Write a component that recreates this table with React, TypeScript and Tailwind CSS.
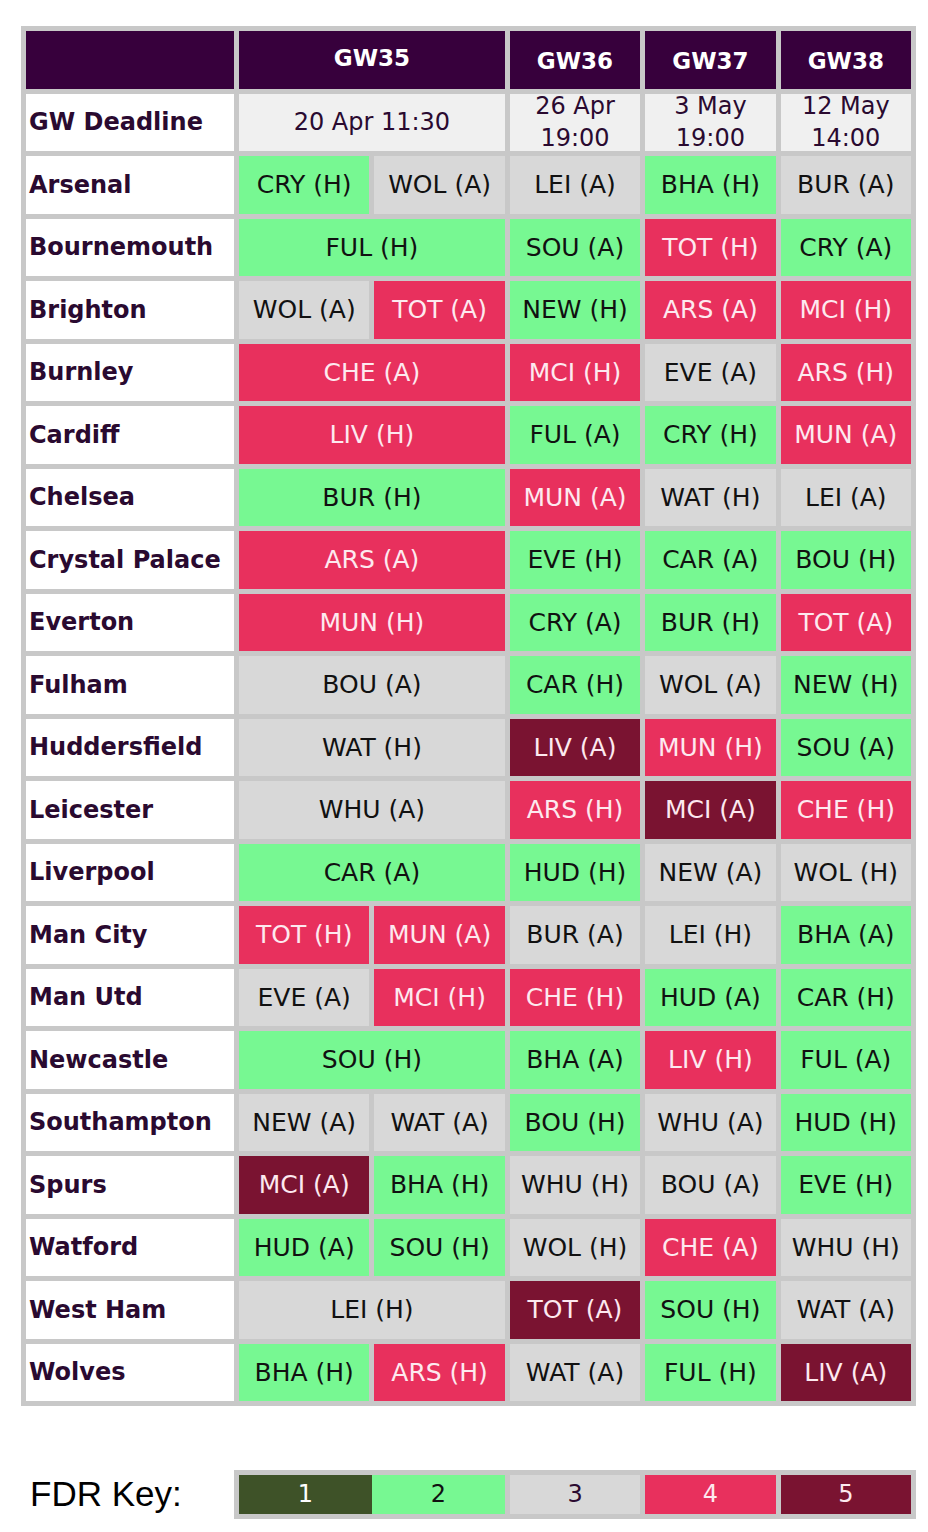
type Fdr = 1 | 2 | 3 | 4 | 5

type Fixture = { t: string; d: Fdr }

interface TeamRow {
  name: string
  gw35: Fixture[]
  gw36: Fixture
  gw37: Fixture
  gw38: Fixture
}

const f = (t: string, d: Fdr): Fixture => ({ t, d })

const rows: TeamRow[] = [
  { name: "Arsenal", gw35: [f("CRY (H)", 2), f("WOL (A)", 3)], gw36: f("LEI (A)", 3), gw37: f("BHA (H)", 2), gw38: f("BUR (A)", 3) },
  { name: "Bournemouth", gw35: [f("FUL (H)", 2)], gw36: f("SOU (A)", 2), gw37: f("TOT (H)", 4), gw38: f("CRY (A)", 2) },
  { name: "Brighton", gw35: [f("WOL (A)", 3), f("TOT (A)", 4)], gw36: f("NEW (H)", 2), gw37: f("ARS (A)", 4), gw38: f("MCI (H)", 4) },
  { name: "Burnley", gw35: [f("CHE (A)", 4)], gw36: f("MCI (H)", 4), gw37: f("EVE (A)", 3), gw38: f("ARS (H)", 4) },
  { name: "Cardiff", gw35: [f("LIV (H)", 4)], gw36: f("FUL (A)", 2), gw37: f("CRY (H)", 2), gw38: f("MUN (A)", 4) },
  { name: "Chelsea", gw35: [f("BUR (H)", 2)], gw36: f("MUN (A)", 4), gw37: f("WAT (H)", 3), gw38: f("LEI (A)", 3) },
  { name: "Crystal Palace", gw35: [f("ARS (A)", 4)], gw36: f("EVE (H)", 2), gw37: f("CAR (A)", 2), gw38: f("BOU (H)", 2) },
  { name: "Everton", gw35: [f("MUN (H)", 4)], gw36: f("CRY (A)", 2), gw37: f("BUR (H)", 2), gw38: f("TOT (A)", 4) },
  { name: "Fulham", gw35: [f("BOU (A)", 3)], gw36: f("CAR (H)", 2), gw37: f("WOL (A)", 3), gw38: f("NEW (H)", 2) },
  { name: "Huddersfield", gw35: [f("WAT (H)", 3)], gw36: f("LIV (A)", 5), gw37: f("MUN (H)", 4), gw38: f("SOU (A)", 2) },
  { name: "Leicester", gw35: [f("WHU (A)", 3)], gw36: f("ARS (H)", 4), gw37: f("MCI (A)", 5), gw38: f("CHE (H)", 4) },
  { name: "Liverpool", gw35: [f("CAR (A)", 2)], gw36: f("HUD (H)", 2), gw37: f("NEW (A)", 3), gw38: f("WOL (H)", 3) },
  { name: "Man City", gw35: [f("TOT (H)", 4), f("MUN (A)", 4)], gw36: f("BUR (A)", 3), gw37: f("LEI (H)", 3), gw38: f("BHA (A)", 2) },
  { name: "Man Utd", gw35: [f("EVE (A)", 3), f("MCI (H)", 4)], gw36: f("CHE (H)", 4), gw37: f("HUD (A)", 2), gw38: f("CAR (H)", 2) },
  { name: "Newcastle", gw35: [f("SOU (H)", 2)], gw36: f("BHA (A)", 2), gw37: f("LIV (H)", 4), gw38: f("FUL (A)", 2) },
  { name: "Southampton", gw35: [f("NEW (A)", 3), f("WAT (A)", 3)], gw36: f("BOU (H)", 2), gw37: f("WHU (A)", 3), gw38: f("HUD (H)", 2) },
  { name: "Spurs", gw35: [f("MCI (A)", 5), f("BHA (H)", 2)], gw36: f("WHU (H)", 3), gw37: f("BOU (A)", 3), gw38: f("EVE (H)", 2) },
  { name: "Watford", gw35: [f("HUD (A)", 2), f("SOU (H)", 2)], gw36: f("WOL (H)", 3), gw37: f("CHE (A)", 4), gw38: f("WHU (H)", 3) },
  { name: "West Ham", gw35: [f("LEI (H)", 3)], gw36: f("TOT (A)", 5), gw37: f("SOU (H)", 2), gw38: f("WAT (A)", 3) },
  { name: "Wolves", gw35: [f("BHA (H)", 2), f("ARS (H)", 4)], gw36: f("WAT (A)", 3), gw37: f("FUL (H)", 2), gw38: f("LIV (A)", 5) },
]

// fdr colours, full class names so tailwind picks them up
const fdrClass: Record<Fdr, string> = {
  1: "bg-[#3e5228] text-white",
  2: "bg-[#77f892] text-[#111111]",
  3: "bg-[#d8d8d8] text-[#111111]",
  4: "bg-[#e8305d] text-[#fde9ef]",
  5: "bg-[#7a1331] text-[#fde9ef]",
}

function FixtureCell({ fx, span }: { fx: Fixture; span?: boolean }) {
  return (
    <div className={`${fdrClass[fx.d]} ${span ? "col-span-2" : ""} flex items-center justify-center text-[25px]`}>
      {fx.t}
    </div>
  )
}

function Deadline({ lines, span }: { lines: string[]; span?: boolean }) {
  return (
    <div
      className={`${span ? "col-span-2" : ""} bg-[#f0f0f0] text-[#2a0a30] flex flex-col items-center justify-center text-[24px] leading-[32px]`}
    >
      {lines.map((l) => (
        <span key={l}>{l}</span>
      ))}
    </div>
  )
}

export default function App() {
  const headers = ["GW36", "GW37", "GW38"]

  return (
    <div className="min-h-[1532px] w-[928px] bg-white pl-[21px] pt-[26px] font-['DejaVu_Sans',sans-serif]">
      <div className="grid w-[895px] grid-cols-[208px_repeat(5,1fr)] auto-rows-[57.5px] gap-[5px] bg-[#c8c8c8] p-[5px]">
        {/* header row */}
        <div className="bg-[#37003c]" />
        <div className="col-span-2 flex items-center justify-center bg-[#37003c] pb-[4px] text-[23px] font-bold text-white">
          GW35
        </div>
        {headers.map((h) => (
          <div key={h} className="flex items-center justify-center bg-[#37003c] pt-[2px] text-[23px] font-bold text-white">
            {h}
          </div>
        ))}

        {/* deadlines */}
        <div className="flex items-center bg-white pl-[3px] text-[24px] font-bold text-[#2a0a30]">GW Deadline</div>
        <Deadline lines={["20 Apr 11:30"]} span />
        <Deadline lines={["26 Apr", "19:00"]} />
        <Deadline lines={["3 May", "19:00"]} />
        <Deadline lines={["12 May", "14:00"]} />

        {rows.map((r) => (
          <div key={r.name} className="contents">
            <div className="flex items-center bg-white pl-[3px] text-[24px] font-bold text-[#2a0a30]">{r.name}</div>
            {r.gw35.length === 1 ? (
              <FixtureCell fx={r.gw35[0]} span />
            ) : (
              r.gw35.map((fx) => <FixtureCell key={fx.t} fx={fx} />)
            )}
            <FixtureCell fx={r.gw36} />
            <FixtureCell fx={r.gw37} />
            <FixtureCell fx={r.gw38} />
          </div>
        ))}
      </div>

      {/* key */}
      <div className="mt-[62px] flex items-center">
        <div className="w-[213px] pl-[9px] font-['Liberation_Sans',sans-serif] text-[35px] text-black">FDR Key:</div>
        <div className="flex w-[682px] gap-[5px] bg-[#c8c8c8] p-[5px] text-[24px]">
          <div className="flex h-[39px] w-[266px]">
            <div className="flex flex-1 items-center justify-center bg-[#3e5228] text-white">1</div>
            <div className="flex flex-1 items-center justify-center bg-[#77f892] text-[#111111]">2</div>
          </div>
          <div className="flex h-[39px] flex-1 items-center justify-center bg-[#d8d8d8] text-[#2a0a30]">3</div>
          <div className="flex h-[39px] flex-1 items-center justify-center bg-[#e8305d] text-[#fde9ef]">4</div>
          <div className="flex h-[39px] flex-1 items-center justify-center bg-[#7a1331] text-[#fde9ef]">5</div>
        </div>
      </div>
    </div>
  )
}
